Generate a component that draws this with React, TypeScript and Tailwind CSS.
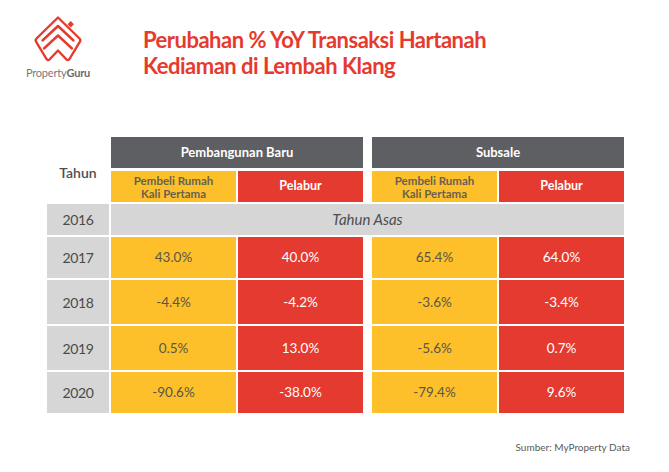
import * as React from "react"

const rows = [
  { year: "2017", h: "h-[41px]", v: ["43.0%", "40.0%", "65.4%", "64.0%"] },
  { year: "2018", h: "h-[44px]", v: ["-4.4%", "-4.2%", "-3.6%", "-3.4%"] },
  { year: "2019", h: "h-[44px]", v: ["0.5%", "13.0%", "-5.6%", "0.7%"] },
  { year: "2020", h: "h-[41px]", v: ["-90.6%", "-38.0%", "-79.4%", "9.6%"] },
]

function Logo() {
  return (
    <div className="w-[66px] flex flex-col items-center">
      <svg width="48" height="47" viewBox="0 0 48 47" fill="none" stroke="#e63a2e" strokeWidth="2.4" strokeLinejoin="round" strokeLinecap="round">
        {/* outer band */}
        <path d="M24 1.5 L45.5 22.5 Q47 24 45.8 25.8 L35.5 43 Q34 45 32.3 43.3 L24 34.5 L15.7 43.3 Q14 45 12.5 43 L2.2 25.8 Q1 24 2.5 22.5 Z" />
        {/* inner chevrons */}
        <path d="M8.5 24.5 L24 10 L39.5 24.5" />
        <path d="M10 32.5 L24 19.5 L38 32.5" />
        {/* chimney */}
        <rect x="34.5" y="6" width="4.5" height="4.5" fill="#e63a2e" stroke="none" transform="rotate(45 36.75 8.25)" />
      </svg>
      <div className="mt-[4px] text-[11px] leading-[12px] tracking-[-0.2px] text-[#7a7a7a] whitespace-nowrap">
        Property<span className="font-bold text-[#6a6a6a]">Guru</span>
      </div>
    </div>
  )
}

export default function App() {
  return (
    <div className="w-[669px] h-[472px] bg-white font-['Lato',sans-serif] text-[#555555]">
      <div className="h-[137px] flex pt-[16px] pl-[25px]">
        <Logo />
        <h1 className="ml-[52px] mt-[11px] text-[22px] leading-[26px] font-bold text-[#e63a2e] tracking-[-0.5px] whitespace-nowrap">
          Perubahan % YoY Transaksi Hartanah
          <br />
          Kediaman di Lembah Klang
        </h1>
      </div>

      <div className="ml-[47px] grid grid-cols-[62px_125px_125px_5px_125px_125px] gap-x-[2px] gap-y-[2px]">
        {/* header */}
        <div className="row-span-2 flex items-center justify-center pt-[6px] text-[14px] font-semibold text-[#4e4e4e]">Tahun</div>
        <div className="col-span-2 h-[32px]">
          <div className="h-[31px] bg-[#5e5f63] flex items-center justify-center text-white text-[13px] font-bold">Pembangunan Baru</div>
        </div>
        <div />
        <div className="col-span-2 h-[32px]">
          <div className="h-[31px] bg-[#5e5f63] flex items-center justify-center text-white text-[13px] font-bold">Subsale</div>
        </div>

        {/* sub header */}
        <div className="h-[31px] bg-[#fdc02b] flex items-center justify-center text-center text-[11.5px] leading-[13px] font-bold text-[#68614f]">Pembeli Rumah<br />Kali Pertama</div>
        <div className="h-[31px] bg-[#e53a2f] flex items-center justify-center text-white text-[12.5px] font-bold">Pelabur</div>
        <div />
        <div className="h-[31px] bg-[#fdc02b] flex items-center justify-center text-center text-[11.5px] leading-[13px] font-bold text-[#68614f]">Pembeli Rumah<br />Kali Pertama</div>
        <div className="h-[31px] bg-[#e53a2f] flex items-center justify-center text-white text-[12.5px] font-bold">Pelabur</div>

        {/* base year */}
        <div className="h-[31px] bg-[#d6d6d6] flex items-center justify-center text-[14px] tracking-[-0.4px] text-[#4a4a4a]">2016</div>
        <div className="col-span-5 h-[31px] bg-[#d6d6d6] flex items-center justify-center italic text-[15px] text-[#4e4e4e]">Tahun Asas</div>

        {rows.map((r) => (
          <React.Fragment key={r.year}>
            <div className={`${r.h} bg-[#d6d6d6] flex items-center justify-center text-[14px] tracking-[-0.4px] text-[#4a4a4a]`}>{r.year}</div>
            <div className={`${r.h} bg-[#fdc02b] flex items-center justify-center text-[13.5px] text-[#5a5548]`}>{r.v[0]}</div>
            <div className={`${r.h} bg-[#e53a2f] flex items-center justify-center text-[13.5px] text-white`}>{r.v[1]}</div>
            <div />
            <div className={`${r.h} bg-[#fdc02b] flex items-center justify-center text-[13.5px] text-[#5a5548]`}>{r.v[2]}</div>
            <div className={`${r.h} bg-[#e53a2f] flex items-center justify-center text-[13.5px] text-white`}>{r.v[3]}</div>
          </React.Fragment>
        ))}
      </div>

      <div className="mt-[27px] pr-[39px] text-right text-[10px] leading-[14px] text-[#5a5a5a]">Sumber: MyProperty Data</div>
    </div>
  )
}
